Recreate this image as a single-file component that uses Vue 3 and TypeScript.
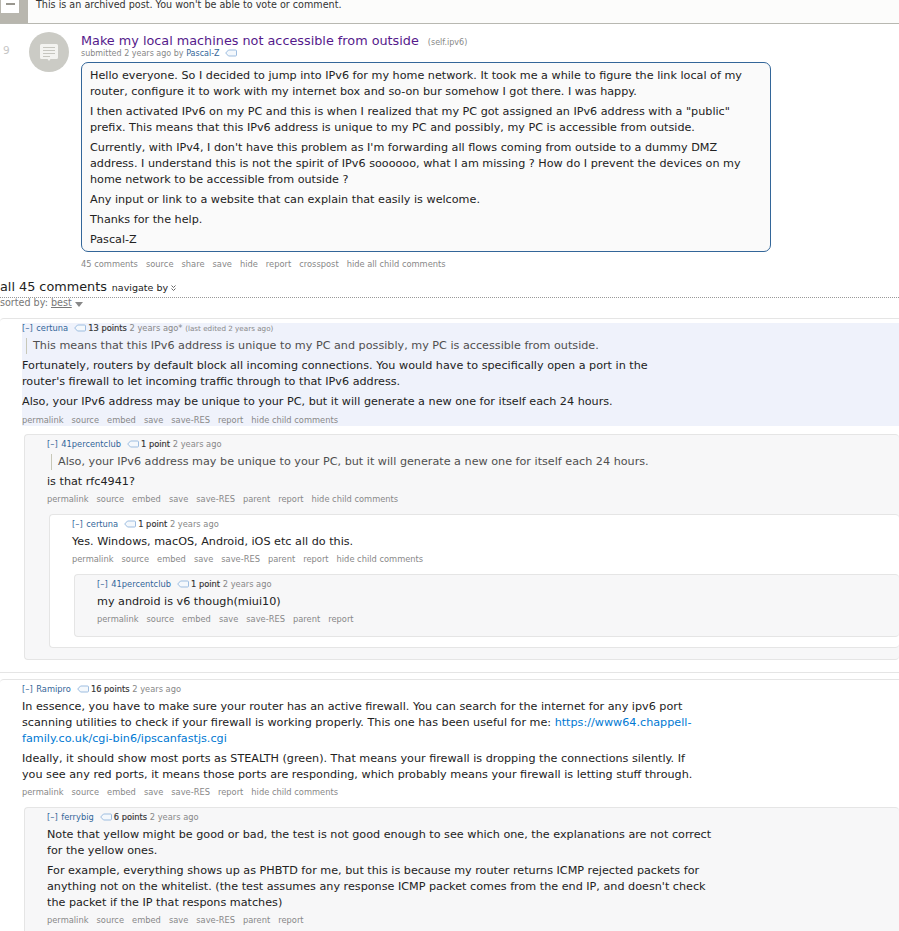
<template>
  <div class="page">
    <div class="notice">
      <div class="notice-icon"><span class="notice-sheet"><i></i></span></div>
      <p>This is an archived post. You won't be able to vote or comment.</p>
    </div>

    <div class="post">
      <span class="rank">9</span>
      <div class="thumb">
        <svg width="18" height="17" viewBox="0 0 18 17">
          <path d="M1.500 0h15A1.500 1.500 0 0 1 18 1.500v12a1.500 1.500 0 0 1-1.500 1.500H10.500L9 17l-1.500-2h-6A1.500 1.500 0 0 1 0 13.500v-12A1.500 1.500 0 0 1 1.500 0z" fill="#f3f3f0" />
          <path d="M3 3.500h12M3 6.500h12M3 9.500h12M3 12.500h7" stroke="#c6c6bf" stroke-width="1" />
        </svg>
      </div>
      <div class="post-main">
        <div class="title-row">
          <a class="title">Make my local machines not accessible from outside</a>
          <span class="domain">(self.ipv6)</span>
        </div>
        <div class="submitted">
          submitted 2 years ago by <a class="author">Pascal-Z</a>
          <svg class="tag" width="12" height="8" viewBox="0 0 12 8"><path d="M.7 4 3.500 1h7a1 1 0 0 1 1 1v4a1 1 0 0 1-1 1h-7z" fill="#f4f8fc" stroke="#9dbde0" /></svg>
        </div>
        <div class="selftext">
          <p>Hello everyone. So I decided to jump into IPv6 for my home network. It took me a while to figure the link local of my router, configure it to work with my internet box and so-on bur somehow I got there. I was happy.</p>
          <p>I then activated IPv6 on my PC and this is when I realized that my PC got assigned an IPv6 address with a "public" prefix. This means that this IPv6 address is unique to my PC and possibly, my PC is accessible from outside.</p>
          <p>Currently, with IPv4, I don't have this problem as I'm forwarding all flows coming from outside to a dummy DMZ address. I understand this is not the spirit of IPv6 soooooo, what I am missing ? How do I prevent the devices on my home network to be accessible from outside ?</p>
          <p>Any input or link to a website that can explain that easily is welcome.</p>
          <p>Thanks for the help.</p>
          <p>Pascal-Z</p>
        </div>
        <ul class="actions">
          <li v-for="a in postActions" :key="a">{{ a }}</li>
        </ul>
      </div>
    </div>

    <div class="comments-head">
      <span class="count">all 45 comments</span>
      <span class="navigate">navigate by
        <svg width="5" height="6" viewBox="0 0 5 6"><path d="M.5.500 2.500 2.500 4.500.500M.5 3.500l2 2 2-2" fill="none" stroke="#555" stroke-width=".9" /></svg>
      </span>
    </div>
    <div class="sort">sorted by: <u>best</u> <i class="caret"></i></div>

    <div class="thread first">
      <div class="entry highlighted">
        <div class="meta">
          <a class="toggle">[–]</a> <a class="author">certuna</a>
          <svg class="tag" width="12" height="8" viewBox="0 0 12 8"><path d="M.7 4 3.500 1h7a1 1 0 0 1 1 1v4a1 1 0 0 1-1 1h-7z" fill="#f4f8fc" stroke="#9dbde0" /></svg>
          <b>13 points</b> 2 years ago* <small>(last edited 2 years ago)</small>
        </div>
        <blockquote>This means that this IPv6 address is unique to my PC and possibly, my PC is accessible from outside.</blockquote>
        <p>Fortunately, routers by default block all incoming connections. You would have to specifically open a port in the router's firewall to let incoming traffic through to that IPv6 address.</p>
        <p>Also, your IPv6 address may be unique to your PC, but it will generate a new one for itself each 24 hours.</p>
        <ul class="actions"><li v-for="a in rootActions" :key="a">{{ a }}</li></ul>
      </div>

      <div class="child grey depth1">
        <div class="entry">
          <div class="meta">
            <a class="toggle">[–]</a> <a class="author">41percentclub</a>
            <svg class="tag" width="12" height="8" viewBox="0 0 12 8"><path d="M.7 4 3.500 1h7a1 1 0 0 1 1 1v4a1 1 0 0 1-1 1h-7z" fill="#f4f8fc" stroke="#9dbde0" /></svg>
            <b>1 point</b> 2 years ago
          </div>
          <blockquote>Also, your IPv6 address may be unique to your PC, but it will generate a new one for itself each 24 hours.</blockquote>
          <p>is that rfc4941?</p>
          <ul class="actions"><li v-for="a in childActions" :key="a">{{ a }}</li></ul>
        </div>

        <div class="child white">
          <div class="entry">
            <div class="meta">
              <a class="toggle">[–]</a> <a class="author">certuna</a>
              <svg class="tag" width="12" height="8" viewBox="0 0 12 8"><path d="M.7 4 3.500 1h7a1 1 0 0 1 1 1v4a1 1 0 0 1-1 1h-7z" fill="#f4f8fc" stroke="#9dbde0" /></svg>
              <b>1 point</b> 2 years ago
            </div>
            <p>Yes. Windows, macOS, Android, iOS etc all do this.</p>
            <ul class="actions"><li v-for="a in childActions" :key="a">{{ a }}</li></ul>
          </div>

          <div class="child grey leaf">
            <div class="entry">
              <div class="meta">
                <a class="toggle">[–]</a> <a class="author">41percentclub</a>
                <svg class="tag" width="12" height="8" viewBox="0 0 12 8"><path d="M.7 4 3.500 1h7a1 1 0 0 1 1 1v4a1 1 0 0 1-1 1h-7z" fill="#f4f8fc" stroke="#9dbde0" /></svg>
                <b>1 point</b> 2 years ago
              </div>
              <p>my android is v6 though(miui10)</p>
              <ul class="actions"><li v-for="a in leafActions" :key="a">{{ a }}</li></ul>
            </div>
          </div>
        </div>
      </div>
    </div>

    <div class="spacer"></div>

    <div class="thread">
      <div class="entry">
        <div class="meta">
          <a class="toggle">[–]</a> <a class="author">Ramipro</a>
          <svg class="tag" width="12" height="8" viewBox="0 0 12 8"><path d="M.7 4 3.500 1h7a1 1 0 0 1 1 1v4a1 1 0 0 1-1 1h-7z" fill="#f4f8fc" stroke="#9dbde0" /></svg>
          <b>16 points</b> 2 years ago
        </div>
        <p>In essence, you have to make sure your router has an active firewall. You can search for the internet for any ipv6 port scanning utilities to check if your firewall is working properly. This one has been useful for me: <a class="link">https://www64.chappell-family.co.uk/cgi-bin6/ipscanfastjs.cgi</a></p>
        <p>Ideally, it should show most ports as STEALTH (green). That means your firewall is dropping the connections silently. If you see any red ports, it means those ports are responding, which probably means your firewall is letting stuff through.</p>
        <ul class="actions"><li v-for="a in rootActions" :key="a">{{ a }}</li></ul>
      </div>

      <div class="child grey depth1">
        <div class="entry">
          <div class="meta">
            <a class="toggle">[–]</a> <a class="author">ferrybig</a>
            <svg class="tag" width="12" height="8" viewBox="0 0 12 8"><path d="M.7 4 3.500 1h7a1 1 0 0 1 1 1v4a1 1 0 0 1-1 1h-7z" fill="#f4f8fc" stroke="#9dbde0" /></svg>
            <b>6 points</b> 2 years ago
          </div>
          <p>Note that yellow might be good or bad, the test is not good enough to see which one, the explanations are not correct for the yellow ones.</p>
          <p>For example, everything shows up as PHBTD for me, but this is because my router returns ICMP rejected packets for anything not on the whitelist. (the test assumes any response ICMP packet comes from the end IP, and doesn't check the packet if the IP that respons matches)</p>
          <ul class="actions"><li v-for="a in ferryActions" :key="a">{{ a }}</li></ul>
        </div>
      </div>
    </div>
  </div>
</template>

<script setup lang="ts">
const postActions: string[] = ['45 comments', 'source', 'share', 'save', 'hide', 'report', 'crosspost', 'hide all child comments']
const rootActions: string[] = ['permalink', 'source', 'embed', 'save', 'save-RES', 'report', 'hide child comments']
const childActions: string[] = ['permalink', 'source', 'embed', 'save', 'save-RES', 'parent', 'report', 'hide child comments']
const leafActions: string[] = ['permalink', 'source', 'embed', 'save', 'save-RES', 'parent', 'report']
const ferryActions: string[] = leafActions
</script>

<style>
html, body {
  margin: 0;
  background: #fff;
  height: 931px;
  overflow: hidden;
}
</style>

<style scoped>
.page {
  font-family: "DejaVu Sans", Verdana, sans-serif;
  font-size: 10px;
  color: #222;
  height: 931px;
  overflow: hidden;
}

p {
  margin: 0;
}

a {
  color: #369;
}

/* archived notice */
.notice {
  display: flex;
  height: 23px;
  background: #fcfcfb;
  border-bottom: 1px solid #b8b8b1;
}

.notice-icon {
  width: 28px;
  background: #b8b6ae;
  flex: none;
}

.notice-sheet {
  display: flex;
  justify-content: center;
  width: 18px;
  height: 13px;
  background: #fff;
  margin-left: 1px;
}

.notice-sheet i {
  width: 9px;
  height: 2px;
  margin-top: 3px;
  background: #99978f;
}

.notice p {
  font-size: 9.600px;
  line-height: 10px;
  color: #333;
  margin-left: 8px;
}

/* post */
.post {
  display: flex;
  padding-top: 8px;
}

.rank {
  width: 29px;
  flex: none;
  padding: 12px 0 0 3px;
  box-sizing: border-box;
  font-size: 10.500px;
  line-height: 12px;
  color: #c6c6c6;
}

.thumb {
  width: 40px;
  height: 40px;
  flex: none;
  display: flex;
  align-items: center;
  justify-content: center;
  border-radius: 50%;
  background: #cbcbc5;
}

.post-main {
  margin-left: 12px;
  width: 690px;
}

.title-row {
  display: flex;
  align-items: baseline;
  height: 16px;
}

.title {
  font-size: 12.800px;
  line-height: 18px;
  color: #551a8b;
}

.domain {
  font-size: 8px;
  color: #888;
  margin-left: 9px;
}

.submitted {
  font-size: 8px;
  line-height: 12px;
  color: #888;
  height: 14px;
}

.tag {
  vertical-align: -1px;
  margin-left: 5px;
}

.selftext {
  box-sizing: border-box;
  border: 1px solid #369;
  border-radius: 7px;
  background: #fafafa;
  padding: 5px 8px 3px;
  height: 190px;
}

.selftext p,
.entry p,
blockquote {
  font-size: 11.200px;
  line-height: 16px;
  color: #222;
}

.selftext p {
  margin-bottom: 4px;
}

.actions {
  display: flex;
  gap: 8px;
  list-style: none;
  margin: 0;
  padding: 0;
  font-size: 8.300px;
  line-height: 12px;
  color: #888;
}

.post .actions {
  margin-top: 6px;
}

/* comment head */
.comments-head {
  display: flex;
  align-items: baseline;
  margin-top: 9px;
  height: 18px;
  line-height: 16px;
}

.count {
  font-size: 12.800px;
  color: #222;
}

.navigate {
  font-size: 9.500px;
  margin-left: 5px;
  color: #222;
}

.sort {
  border-top: 1px dotted #999;
  font-size: 9.600px;
  line-height: 10px;
  color: #777;
  height: 20px;
}

.caret {
  display: inline-block;
  width: 0;
  height: 0;
  border: 4.500px solid transparent;
  border-top: 5px solid #888;
  border-bottom: 0;
  vertical-align: -1px;
}

/* comments */
.thread {
  border-top: 1px solid #e5e5e5;
  border-top-left-radius: 4px;
  padding-top: 4px;
  padding-bottom: 12px;
}

.spacer {
  border-top: 1px solid #e5e5e5;
  height: 6px;
}

.entry {
  padding-left: 22px;
}

.highlighted {
  margin-left: 22px;
  padding: 0;
  background: #eff2fb;
}

.meta {
  font-size: 8.300px;
  line-height: 10px;
  height: 12px;
  color: #888;
}

.meta b {
  font-weight: normal;
  color: #333;
  -webkit-text-stroke: 0.15px #333;
}

.meta small {
  font-size: 7.200px;
}

.meta .tag {
  margin: 0 2px 0 6px;
}

.toggle {
  color: #369;
  margin-right: 1px;
}

blockquote {
  margin: 3px 0 4px 4px;
  padding-left: 6px;
  border-left: 1px solid #c8c8b8;
  color: #4f4f4f;
}

.entry p {
  margin: 4px 0;
  max-width: 672px;
}

.entry .meta + p {
  margin-top: 3px;
}

.entry blockquote + p {
  margin-top: 0;
}

.entry .actions {
  margin-top: -1px;
}

.highlighted .actions {
  margin-top: 0 !important;
}

.link {
  color: #0079d3;
}

.child {
  border: 1px solid #e5e5e5;
  border-radius: 4px;
  border-right: 0;
  padding: 4px 0 0;
}

.grey {
  background: #f7f7f8;
}

.white {
  background: #fff;
}

.depth1 {
  margin: 9px 0 0 24px;
  padding-bottom: 11px;
}

.highlighted + .depth1 {
  margin-top: 8px;
}

.child > .child {
  margin: 9px 0 0 24px;
  padding-bottom: 10px;
}

.child > .child.leaf {
  padding-bottom: 11px;
}
</style>
